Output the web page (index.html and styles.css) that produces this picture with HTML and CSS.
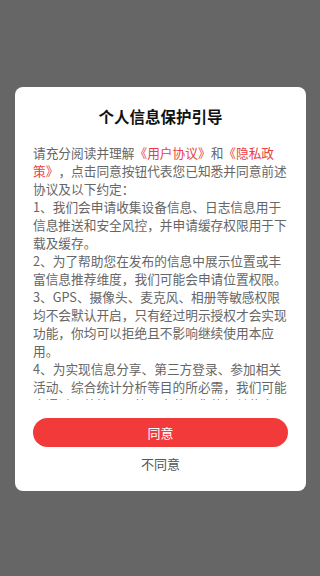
FILE: index.html
```html
<!DOCTYPE html>
<html lang="zh-CN">
<head>
<meta charset="utf-8">
<title>个人信息保护引导</title>
<link rel="stylesheet" href="styles.css">
</head>
<body>
<div class="screen">
  <div class="dialog">
    <h1 class="title">个人信息保护引导</h1>
    <div class="content">
      <p>请充分阅读并理解<span class="link">《用户协议》</span>和<span class="link">《隐私政策》</span>，点击同意按钮代表您已知悉并同意前述协议及以下约定：</p>
      <p>1、我们会申请收集设备信息、日志信息用于信息推送和安全风控，并申请缓存权限用于下载及缓存。</p>
      <p>2、为了帮助您在发布的信息中展示位置或丰富信息推荐维度，我们可能会申请位置权限。</p>
      <p>3、GPS、摄像头、麦克风、相册等敏感权限均不会默认开启，只有经过明示授权才会实现功能，你均可以拒绝且不影响继续使用本应用。</p>
      <p>4、为实现信息分享、第三方登录、参加相关活动、综合统计分析等目的所必需，我们可能会通过开放接口从第三方获取您的相关信息。</p>
    </div>
    <button class="agree">同意</button>
    <div class="disagree">不同意</div>
  </div>
</div>
</body>
</html>
```
FILE: styles.css
```css
* { box-sizing: border-box; }
html, body {
  margin: 0;
  padding: 0;
}
body {
  width: 320px;
  height: 576px;
  background: #666666;
  font-family: "Noto Sans CJK SC", "Noto Sans", sans-serif;
  overflow: hidden;
}
.screen {
  padding-top: 87px;
  padding-left: 15px;
}
.dialog {
  width: 291px;
  background: #ffffff;
  border-radius: 8px;
  padding: 19px 18px 18px 18px;
  display: flex;
  flex-direction: column;
}
.title {
  margin: 0;
  font-size: 15.5px;
  line-height: 20px;
  font-weight: 700;
  color: #111111;
  text-align: center;
}
.content {
  margin-top: 18px;
  height: 256px;
  overflow: hidden;
  font-size: 12.7px;
  line-height: 18px;
  color: #666666;
  text-spacing-trim: space-all;
}
.content p {
  margin: 0;
}
.link {
  color: #e8413f;
}
.agree {
  margin-top: 18px;
  height: 29px;
  width: 100%;
  border: none;
  border-radius: 15px;
  background: #f23a3a;
  color: #ffffff;
  font-family: inherit;
  font-size: 13px;
  line-height: 29px;
  padding: 0;
}
.disagree {
  margin-top: 8px;
  text-align: center;
  font-size: 13px;
  line-height: 18px;
  color: #555555;
}
```
